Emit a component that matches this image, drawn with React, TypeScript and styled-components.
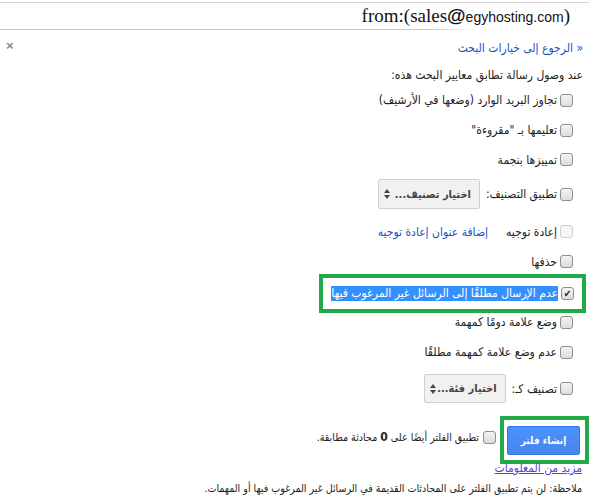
import React from "react";
import styled, { createGlobalStyle } from "styled-components";

const Global = createGlobalStyle`
  html, body { margin: 0; padding: 0; background: #fff; }
  body { font-family: "DejaVu Sans Condensed", "DejaVu Sans", Arial, sans-serif; font-size: 12px; color: #222; }
`;

const Page = styled.div`
  width: 589px;
  height: 503px;
  overflow: hidden;
  direction: rtl;
  display: flex;
  flex-direction: column;
`;

const TopBar = styled.div`
  margin-top: 2px;
  border-top: 1px solid #d4d4d4;
  height: 26px;
  display: flex;
  align-items: center;
  padding-right: 19px;
`;

const SearchText = styled.div`
  direction: ltr;
  color: #111;
  white-space: nowrap;
  display: flex;
  align-items: baseline;
`;

const Serif = styled.span`
  font-family: "Liberation Serif", serif;
  font-size: 19px;
`;

const At = styled.span`
  font-family: "Liberation Sans", Arial, sans-serif;
  font-weight: bold;
  font-size: 19px;
`;

const Small = styled.span`
  font-family: "Liberation Sans", Arial, sans-serif;
  font-size: 14px;
`;

const TopRule = styled.div`
  width: 475px;
  height: 1px;
  margin-right: auto;
  background: linear-gradient(to right, #c8c8c8 90%, rgba(200,200,200,0));
`;

const HeadRow = styled.div`
  display: flex;
  justify-content: space-between;
  align-items: center;
  height: 20px;
  margin-top: 8px;
  padding: 0 6px 0 6px;
`;

const Link = styled.a<{ $visited?: boolean; $underline?: boolean }>`
  color: ${(p) => (p.$visited ? "#5b3fd0" : "#1a55c4")};
  text-decoration: ${(p) => (p.$underline ? "underline" : "none")};
  cursor: pointer;
  white-space: nowrap;
`;

const Close = styled.span`
  color: #8a8a8a;
  font-family: "Liberation Sans", Arial, sans-serif;
  font-weight: bold;
  font-size: 13px;
  line-height: 1;
  margin-bottom: 5px;
`;

const Intro = styled.div`
  height: 20px;
  margin-top: 7px;
  padding-right: 6px;
  display: flex;
  align-items: center;
  white-space: nowrap;
`;

const Row = styled.div<{ $h: number }>`
  display: flex;
  align-items: center;
  height: ${(p) => p.$h}px;
  padding-right: 16px;
  gap: 3px;
  white-space: nowrap;
`;

const Box = styled.span<{ $disabled?: boolean }>`
  width: 11px;
  height: 11px;
  flex: none;
  border: 1px solid ${(p) => (p.$disabled ? "#cfcfcf" : "#8f8f8f")};
  border-radius: 3px;
  background: ${(p) =>
    p.$disabled ? "#f6f6f6" : "linear-gradient(#f4f4f4, #dcdcdc)"};
  display: flex;
  align-items: center;
  justify-content: center;
  color: #222;
  font-size: 10px;
  line-height: 1;
`;

const Label = styled.span<{ $size?: number }>`
  color: #222;
  font-size: ${(p) => p.$size ?? 12}px;
`;

const Select = styled.div<{ $w: number; $h: number }>`
  width: ${(p) => p.$w}px;
  height: ${(p) => p.$h}px;
  box-sizing: border-box;
  border: 1px solid #d0d0d0;
  border-radius: 2px;
  background: #f1f1f1;
  display: flex;
  align-items: center;
  justify-content: space-between;
  padding: 0 8px 0 5px;
  margin-right: 3px;
  font-weight: bold;
  color: #444;
  font-size: 11px;
`;

const Arrows = styled.span`
  display: flex;
  flex-direction: column;
  align-items: center;
  gap: 2px;
`;

const Tri = styled.span<{ $up?: boolean }>`
  width: 0;
  height: 0;
  border-left: 3.5px solid transparent;
  border-right: 3.5px solid transparent;
  ${(p) => (p.$up ? "border-bottom: 4px solid #444;" : "border-top: 4px solid #444;")}
`;

const Spacer = styled.span<{ $w: number }>`
  width: ${(p) => p.$w}px;
  flex: none;
`;

const GreenFrame = styled.div<{ $h: number }>`
  margin-right: 3px;
  width: 267px;
  height: ${(p) => p.$h}px;
  box-sizing: border-box;
  border: 4px solid #22a94a;
  display: flex;
  align-items: center;
  padding-right: 8px;
  gap: 3px;
  margin-left: auto;
  white-space: nowrap;
`;

const Selected = styled.span`
  background: #3390ff;
  color: #fff;
  line-height: 15px;
`;

const ActionRow = styled.div`
  display: flex;
  align-items: flex-start;
  margin-top: 12px;
  height: 48px;
  white-space: nowrap;
`;

const ButtonFrame = styled.div`
  width: 89px;
  height: 48px;
  box-sizing: border-box;
  border: 4px solid #22a94a;
  display: flex;
  align-items: center;
  justify-content: center;
  padding-right: 2px;
`;

const Primary = styled.button`
  width: 73px;
  height: 29px;
  box-sizing: border-box;
  background: linear-gradient(#4d90fe, #4787ed);
  border: 1px solid #3079ed;
  border-radius: 2px;
  color: #fff;
  font-family: "DejaVu Sans Condensed", "DejaVu Sans", sans-serif;
  font-weight: bold;
  font-size: 10px;
  padding: 0;
`;

const ApplyOpt = styled.div`
  display: flex;
  align-items: center;
  gap: 4px;
  margin-top: 14px;
  margin-right: 4px;
`;

const Bold = styled.b`
  font-size: 12px;
`;

const More = styled.div`
  height: 20px;
  margin-top: -6px;
  padding-right: 7px;
  display: flex;
  align-items: center;
`;

const Note = styled.div`
  height: 20px;
  padding-right: 7px;
  display: flex;
  align-items: center;
  white-space: nowrap;
  font-size: 10.6px;
`;

export default function App() {
  return (
    <>
      <Global />
      <Page>
        <TopBar>
          <SearchText>
            <Serif>from:(sales</Serif>
            <At>@</At>
            <Small>egyhosting.com</Small>
            <Serif>)</Serif>
          </SearchText>
        </TopBar>
        <TopRule />
        <HeadRow>
          <Link>« الرجوع إلى خيارات البحث</Link>
          <Close>×</Close>
        </HeadRow>
        <Intro>عند وصول رسالة تطابق معايير البحث هذه:</Intro>
        <Row $h={30}>
          <Box />
          <Label>تجاوز البريد الوارد (وضعها في الأرشيف)</Label>
        </Row>
        <Row $h={30}>
          <Box />
          <Label>تعليمها بـ "مقروءة"</Label>
        </Row>
        <Row $h={29}>
          <Box />
          <Label>تمييزها بنجمة</Label>
        </Row>
        <Row $h={40}>
          <Box />
          <Label>تطبيق التصنيف:</Label>
          <Select $w={102} $h={30}>
            <span>اختيار تصنيف...</span>
            <Arrows>
              <Tri $up />
              <Tri />
            </Arrows>
          </Select>
        </Row>
        <Row $h={35}>
          <Box $disabled />
          <Label>إعادة توجيه</Label>
          <Spacer $w={12} />
          <Link>إضافة عنوان إعادة توجيه</Link>
        </Row>
        <Row $h={25}>
          <Box />
          <Label>حذفها</Label>
        </Row>
        <Row $h={39} style={{ paddingRight: 0 }}>
          <GreenFrame $h={39}>
            <Box>✔</Box>
            <Selected>عدم الإرسال مطلقًا إلى الرسائل غير المرغوب فيها</Selected>
          </GreenFrame>
        </Row>
        <Row $h={18}>
          <Box />
          <Label>وضع علامة دومًا كمهمة</Label>
        </Row>
        <Row $h={42}>
          <Box />
          <Label>عدم وضع علامة كمهمة مطلقًا</Label>
        </Row>
        <Row $h={31}>
          <Box />
          <Label>تصنيف كـ:</Label>
          <Select $w={82} $h={29}>
            <span>اختيار فئة...</span>
            <Arrows>
              <Tri $up />
              <Tri />
            </Arrows>
          </Select>
        </Row>
        <ActionRow>
          <ButtonFrame>
            <Primary>إنشاء فلتر</Primary>
          </ButtonFrame>
          <ApplyOpt>
            <Box />
            <Label $size={10.6}>
              تطبيق الفلتر أيضًا على <Bold>0</Bold> محادثة مطابقة.
            </Label>
          </ApplyOpt>
        </ActionRow>
        <More>
          <Link $visited $underline>مزيد من المعلومات</Link>
        </More>
        <Note>ملاحظة: لن يتم تطبيق الفلتر على المحادثات القديمة في الرسائل غير المرغوب فيها أو المهمات.</Note>
      </Page>
    </>
  );
}
